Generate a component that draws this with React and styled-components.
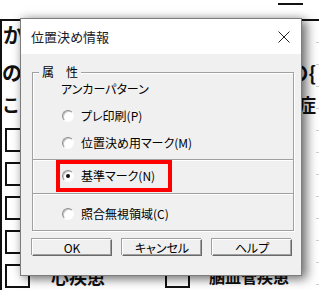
import React from 'react';
import styled, { createGlobalStyle } from 'styled-components';

const GlobalStyle = createGlobalStyle`
  html, body {
    margin: 0;
    padding: 0;
    background: #fff;
  }
  body {
    width: 319px;
    height: 290px;
    overflow: hidden;
    font-family: "Noto Sans CJK JP", "Noto Sans", sans-serif;
  }
`;

const Screen = styled.div`
  position: relative;
  width: 319px;
  height: 290px;
  overflow: hidden;
  background: #fff;
`;

/* ---------- document behind the dialog ---------- */

const TopStrip = styled.div`
  height: 19px;
  display: flex;
  justify-content: flex-end;
  padding-right: 16px;
`;

const TopRule = styled.div`
  width: 25px;
  height: 2px;
  margin-top: 3px;
  background: #111;
`;

const Sheet = styled.div`
  height: 271px;
  box-sizing: border-box;
  border-top: 2px solid #111;
  border-left: 2px solid #111;
  background-image: repeating-linear-gradient(
    to bottom,
    transparent 0,
    transparent 21px,
    #cfcfcf 21px,
    #cfcfcf 22px
  );
  background-size: 3px 100%;
  background-position: right top;
  background-repeat: no-repeat;
  color: #111;
  font-weight: 700;
`;

const Line = styled.div`
  display: flex;
  justify-content: space-between;
  margin-top: ${(p) => p.$gap}px;
  padding-left: ${(p) => p.$indent || 0}px;
  padding-right: 3px;
  font-size: ${(p) => p.$size}px;
  line-height: ${(p) => p.$size}px;
  white-space: nowrap;
`;

const Rows = styled.div`
  margin-top: 10px;
`;

const Row = styled.div`
  display: flex;
  align-items: center;
  height: 34px;
`;

const Item = styled.div`
  display: flex;
  align-items: center;
  margin-left: ${(p) => p.$at}px;
`;

const Box = styled.div`
  width: 25px;
  height: 24px;
  box-sizing: border-box;
  border: 2px solid #111;
`;

const ItemLabel = styled.span`
  margin-left: ${(p) => p.$gap}px;
  font-size: ${(p) => p.$size}px;
  line-height: 20px;
  white-space: nowrap;
`;

/* ---------- dialog ---------- */

const Dialog = styled.div`
  position: absolute;
  left: 20px;
  top: 18px;
  width: 282px;
  height: 258px;
  box-sizing: border-box;
  border: 1px solid #7d7d7d;
  background: #f0f0f0;
  box-shadow: 5px 3px 10px rgba(0, 0, 0, 0.5), 0 0 9px rgba(0, 0, 0, 0.18);
  display: flex;
  flex-direction: column;
  color: #000;
  font-family: "Noto Sans CJK JP", sans-serif;
  font-feature-settings: "palt";
`;

const TitleBar = styled.div`
  height: 35px;
  flex: none;
  background: #fff;
  display: flex;
  align-items: center;
  justify-content: space-between;
  padding: 0 11px 0 10px;
  font-size: 13px;
  color: #1a1a2a;
`;

const CloseIcon = () => (
  <svg width="12" height="12" viewBox="0 0 12 12">
    <path d="M0.5 0.5 L11.5 11.5 M11.5 0.5 L0.5 11.5" stroke="#222" strokeWidth="1" fill="none" />
  </svg>
);

const Client = styled.div`
  flex: 1;
  padding: 18px 7px 0 11px;
  font-size: 12px;
`;

const Group = styled.div`
  position: relative;
  height: 159px;
  box-sizing: border-box;
  border: 1px solid #a0a0a0;
  box-shadow: 1px 1px 0 #fff, inset 1px 1px 0 #fff;
  padding-top: 9px;
  display: flex;
  flex-direction: column;
`;

const Legend = styled.span`
  position: absolute;
  top: -8px;
  left: 6px;
  padding: 0 3px;
  background: #f0f0f0;
  line-height: 14px;
  font-size: 12px;
  font-feature-settings: normal;
`;

const Heading = styled.div`
  height: 14px;
  line-height: 14px;
  padding-left: 28px;
  margin-bottom: 6px;
`;

const Separator = styled.div`
  height: 1px;
  flex: none;
  background: #a0a0a0;
  box-shadow: 0 1px 0 #fff;
  margin-top: ${(p) => p.$gap || 0}px;
`;

const Band = styled.div`
  height: ${(p) => p.$h}px;
  flex: none;
  padding-top: ${(p) => p.$pad || 0}px;
  box-sizing: border-box;
`;

const RadioRow = styled.div`
  display: flex;
  align-items: center;
  width: fit-content;
  height: ${(p) => p.$h || 27}px;
  box-sizing: border-box;
  margin-left: 23px;
  padding: 0 13px 0 2px;
  border: 4px solid ${(p) => (p.$marked ? '#ff0000' : 'transparent')};
  line-height: 14px;
`;

const RadioDot = styled.span`
  position: relative;
  width: 12px;
  height: 12px;
  flex: none;
  box-sizing: border-box;
  border-radius: 50%;
  border: 1px solid;
  border-color: #8c8c8c #fcfcfc #fcfcfc #8c8c8c;
  box-shadow: inset 1px 1px 0 #c8c8c8;
  background: #fff;

  &::after {
    content: '';
    display: ${(p) => (p.$checked ? 'block' : 'none')};
    position: absolute;
    left: 3px;
    top: 3px;
    width: 4px;
    height: 4px;
    border-radius: 50%;
    background: #111;
  }
`;

const RadioText = styled.span`
  margin-left: 7px;
  white-space: nowrap;
`;

const Buttons = styled.div`
  display: flex;
  gap: 10px;
  margin-top: 8px;
`;

const Button = styled.div`
  width: 80px;
  height: 17px;
  box-sizing: border-box;
  border: 1px solid;
  border-color: #fff #696969 #696969 #fff;
  box-shadow: inset -1px -1px 0 #a0a0a0, -1px -1px 0 #a0a0a0;
  background: #f0f0f0;
  display: flex;
  align-items: center;
  justify-content: center;
  font-size: 12px;
  line-height: 14px;
`;

const Radio = ({ label, checked, marked, h }) => (
  <RadioRow $marked={marked} $h={h}>
    <RadioDot $checked={checked} />
    <RadioText>{label}</RadioText>
  </RadioRow>
);

export default function App() {
  return (
    <Screen>
      <GlobalStyle />
      <TopStrip>
        <TopRule />
      </TopStrip>
      <Sheet>
        <Line $gap={4} $size={20} $indent={1}>
          <span>か</span>
          <span />
        </Line>
        <Line $gap={18} $size={20}>
          <span>の</span>
          <span>の{'{'}</span>
        </Line>
        <Line $gap={12} $size={18}>
          <span>こ</span>
          <span>い症</span>
        </Line>
        <Rows>
          <Row>
            <Item $at={3}>
              <Box />
            </Item>
          </Row>
          <Row>
            <Item $at={3}>
              <Box />
            </Item>
          </Row>
          <Row>
            <Item $at={3}>
              <Box />
            </Item>
          </Row>
          <Row>
            <Item $at={3}>
              <Box />
            </Item>
          </Row>
          <Row>
            <Item $at={3}>
              <Box />
              <ItemLabel $gap={21} $size={18}>心疾患</ItemLabel>
            </Item>
            <Item $at={60}>
              <Box />
              <ItemLabel $gap={19} $size={16}>脳血管疾患</ItemLabel>
            </Item>
          </Row>
        </Rows>
      </Sheet>

      <Dialog>
        <TitleBar>
          <span>位置決め情報</span>
          <CloseIcon />
        </TitleBar>
        <Client>
          <Group>
            <Legend>属　性</Legend>
            <Heading>アンカーパターン</Heading>
            <Radio label="プレ印刷(P)" />
            <Radio label="位置決め用マーク(M)" />
            <Separator $gap={3} />
            <Band $h={33}>
              <Radio label="基準マーク(N)" checked marked h={32} />
            </Band>
            <Separator />
            <Band $h={33} $pad={6}>
              <Radio label="照合無視領域(C)" />
            </Band>
          </Group>
          <Buttons>
            <Button>OK</Button>
            <Button>キャンセル</Button>
            <Button>ヘルプ</Button>
          </Buttons>
        </Client>
      </Dialog>
    </Screen>
  );
}
